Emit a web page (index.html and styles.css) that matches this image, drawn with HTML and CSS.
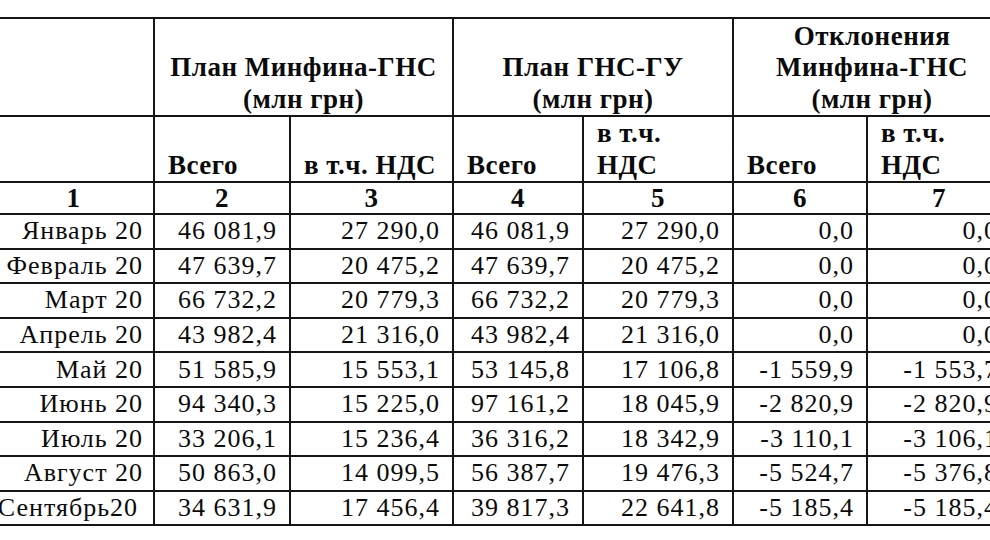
FILE: index.html
```html
<!DOCTYPE html>
<html lang="ru">
<head>
<meta charset="utf-8">
<link rel="stylesheet" href="styles.css">
</head>
<body>
<div class="sheet">
<table class="plan">
  <colgroup>
    <col class="c1"><col class="c2"><col class="c3"><col class="c4"><col class="c5"><col class="c6"><col class="c7">
  </colgroup>
  <thead>
    <tr class="h1">
      <th></th>
      <th colspan="2">План Минфина-ГНС<br>(млн грн)</th>
      <th colspan="2">План ГНС-ГУ<br>(млн грн)</th>
      <th colspan="2">Отклонения<br>Минфина-ГНС<br>(млн грн)</th>
    </tr>
    <tr class="h2">
      <th></th>
      <th>Всего</th>
      <th>в т.ч. НДС</th>
      <th>Всего</th>
      <th>в т.ч.<br>НДС</th>
      <th>Всего</th>
      <th>в т.ч.<br>НДС</th>
    </tr>
    <tr class="h3">
      <th>1</th><th>2</th><th>3</th><th>4</th><th>5</th><th>6</th><th>7</th>
    </tr>
  </thead>
  <tbody>
    <tr><td>Январь 20</td><td>46 081,9</td><td>27 290,0</td><td>46 081,9</td><td>27 290,0</td><td>0,0</td><td>0,0</td></tr>
    <tr><td>Февраль 20</td><td>47 639,7</td><td>20 475,2</td><td>47 639,7</td><td>20 475,2</td><td>0,0</td><td>0,0</td></tr>
    <tr><td>Март 20</td><td>66 732,2</td><td>20 779,3</td><td>66 732,2</td><td>20 779,3</td><td>0,0</td><td>0,0</td></tr>
    <tr><td>Апрель 20</td><td>43 982,4</td><td>21 316,0</td><td>43 982,4</td><td>21 316,0</td><td>0,0</td><td>0,0</td></tr>
    <tr><td>Май 20</td><td>51 585,9</td><td>15 553,1</td><td>53 145,8</td><td>17 106,8</td><td>-1 559,9</td><td>-1 553,7</td></tr>
    <tr><td>Июнь 20</td><td>94 340,3</td><td>15 225,0</td><td>97 161,2</td><td>18 045,9</td><td>-2 820,9</td><td>-2 820,9</td></tr>
    <tr><td>Июль 20</td><td>33 206,1</td><td>15 236,4</td><td>36 316,2</td><td>18 342,9</td><td>-3 110,1</td><td>-3 106,1</td></tr>
    <tr><td>Август 20</td><td>50 863,0</td><td>14 099,5</td><td>56 387,7</td><td>19 476,3</td><td>-5 524,7</td><td>-5 376,8</td></tr>
    <tr><td class="wide-label">Сентябрь20</td><td>34 631,9</td><td>17 456,4</td><td>39 817,3</td><td>22 641,8</td><td>-5 185,4</td><td>-5 185,4</td></tr>
  </tbody>
</table>
</div>
</body>
</html>
```

FILE: styles.css
```css
html, body {
  margin: 0;
  padding: 0;
  background: #ffffff;
}

.sheet {
  width: 990px;
  height: 540px;
  overflow: hidden;
  padding-top: 17px;
  box-sizing: border-box;
}

.plan {
  border-collapse: collapse;
  table-layout: fixed;
  width: 1018px;
  margin-left: -8px;
  font-family: "Liberation Serif", "Times New Roman", serif;
  color: #0b0b0b;
}

.c1 { width: 161px; }
.c2 { width: 136px; }
.c3 { width: 163px; }
.c4 { width: 130px; }
.c5 { width: 150px; }
.c6 { width: 134px; }
.c7 { width: 144px; }

.plan th,
.plan td {
  border: 2px solid #161616;
  padding: 0 12px;
  white-space: nowrap;
}

.plan th {
  font-weight: bold;
  font-size: 27px;
  letter-spacing: 0.5px;
  line-height: 31.5px;
}

.h1 th {
  height: 96px;
  vertical-align: bottom;
  text-align: center;
  padding-bottom: 0;
}

.h2 th {
  height: 62px;
  vertical-align: bottom;
  text-align: left;
  padding-left: 13px;
  padding-bottom: 0;
  line-height: 32px;
}

.h3 th {
  height: 30px;
  text-align: center;
  line-height: 30px;
}

.plan td {
  font-size: 26px;
  letter-spacing: 1px;
  height: 32.6px;
  text-align: right;
  line-height: 30px;
}

.plan td:first-child {
  padding-right: 10px;
}

.plan td.wide-label {
  padding-left: 0;
  padding-right: 15px;
}
```
